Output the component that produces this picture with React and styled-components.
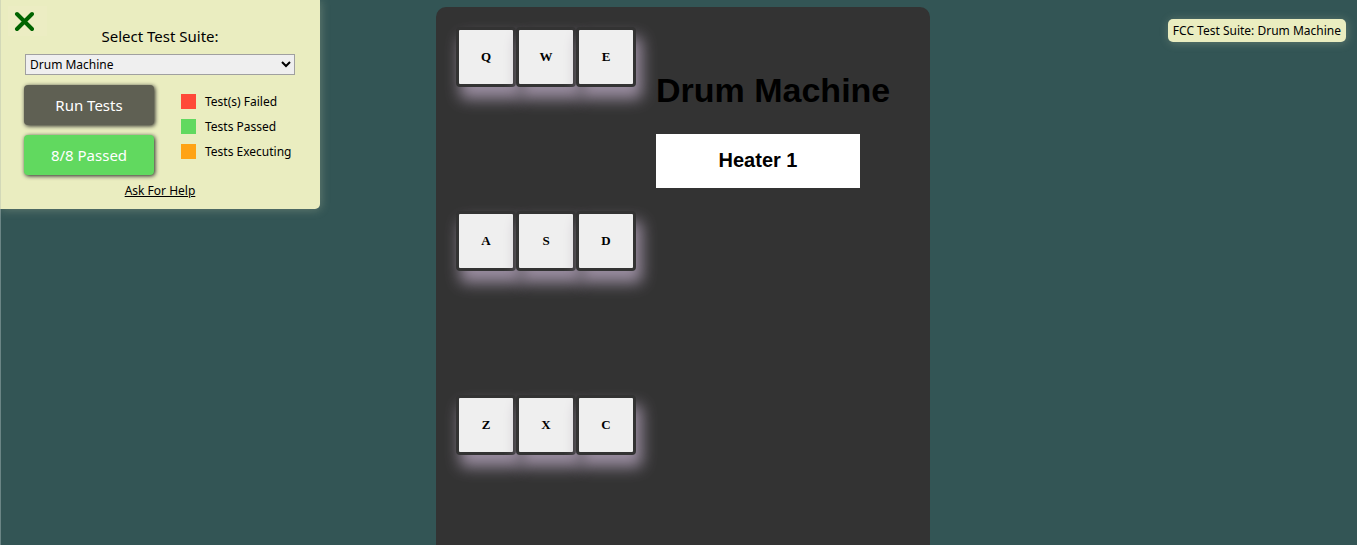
import React from "react";
import styled, { createGlobalStyle } from "styled-components";

const GlobalStyle = createGlobalStyle`
  * { box-sizing: border-box; }
  html { scrollbar-width: none; }
  body {
    min-height: 100vh;
    margin: 0;
    border-left: 1px solid #6b8585;
    background: #335555;
    color: #000;
    font-family: "Liberation Sans", Arial, sans-serif;
  }
`;

const Page = styled.div`
  display: flex;
  padding-left: 8px;
`;

const Machine = styled.main`
  display: flex;
  width: 494px;
  margin: 7px auto 0;
  padding: 20px;
  border-radius: 10px;
  background: #333;
`;

const Pads = styled.div`
  display: grid;
  grid-template-columns: repeat(3, 60px);
  grid-auto-rows: 184px;
`;

const Pad = styled.button`
  width: 60px;
  height: 60px;
  padding: 0;
  border: 3px solid #333;
  border-radius: 4px;
  background: #efefef;
  color: #000;
  box-shadow: 5px 11px 15px 1px #9a8da0;
  font: bold 13px "Liberation Serif", "Times New Roman", serif;
`;

const Info = styled.section`
  margin-left: 20px;
`;

const Title = styled.h1`
  margin: 44px 0 24px;
  font-size: 34px;
  line-height: 39px;
  white-space: nowrap;
`;

const Display = styled.p`
  width: 204px;
  margin: 0;
  padding-bottom: 2px;
  background: #fff;
  font-size: 20px;
  font-weight: bold;
  line-height: 52px;
  text-align: center;
`;

const Panel = styled.aside`
  position: absolute;
  top: 0;
  left: 0;
  width: 320px;
  padding: 24px 25px 10px 24px;
  border-left: 1px solid #d3d9b8;
  border-radius: 0 0 5px 0;
  background: #eaedc0;
  box-shadow: 1px 1px 10px rgba(234, 237, 192, 0.25);
  font: 12px "Noto Sans", sans-serif;
`;

const CloseButton = styled.button`
  position: absolute;
  top: 6px;
  left: 7px;
  width: 39px;
  height: 30px;
  padding: 0 0 0 5px;
  border: 0;
  background: #ecedc3;
  svg { display: block; }
`;

const SuiteLabel = styled.label`
  display: block;
  margin-bottom: 6px;
  font-size: 15px;
  line-height: 24px;
  text-align: center;
`;

const SuiteSelect = styled.select`
  display: block;
  width: 270px;
  height: 21px;
  border: 1px solid #a0a0a0;
  border-radius: 0;
  background: #efefef;
  color: #000;
  font: 12px "Noto Sans", sans-serif;
`;

const Results = styled.div`
  display: flex;
  margin: 10px 0 0 -1px;
`;

const Actions = styled.div`
  display: grid;
  gap: 10px;
`;

const Action = styled.button`
  width: 130px;
  height: 40px;
  padding: 0;
  border: 0;
  border-radius: 4px;
  background: ${({ $color }) => $color};
  color: #fff;
  box-shadow: 1px 1px 4px #222;
  font: 15px "Noto Sans", sans-serif;
`;

const Legend = styled.ul`
  margin: 4px 0 0 27px;
  padding: 0;
  list-style: none;
`;

const LegendItem = styled.li`
  display: flex;
  align-items: center;
  gap: 9px;
  height: 25px;
  white-space: nowrap;
  &::before {
    content: "";
    width: 15px;
    height: 15px;
    background: ${({ $color }) => $color};
  }
`;

const HelpLink = styled.a`
  display: block;
  width: max-content;
  margin: 7px auto 0;
  color: #000;
  line-height: 17px;
`;

const SuiteBadge = styled.div`
  position: absolute;
  top: 19px;
  right: 11px;
  padding: 0 5px;
  border-radius: 5px;
  background: #eaedc0;
  box-shadow: 1px 1px 10px rgba(234, 237, 192, 0.25);
  font: 12px/23px "Noto Sans", sans-serif;
`;

const keys = ["Q", "W", "E", "A", "S", "D", "Z", "X", "C"];

export default function App() {
  return (
    <>
      <GlobalStyle />
      <Page>
        <Machine>
          <Pads>
            {keys.map((key) => <Pad key={key} type="button">{key}</Pad>)}
          </Pads>
          <Info>
            <Title>Drum Machine</Title>
            <Display>Heater 1</Display>
          </Info>
        </Machine>
      </Page>
      <Panel>
        <CloseButton type="button" aria-label="Close test panel">
          <svg width="21" height="30" viewBox="0 0 21 30" stroke="#006400" strokeWidth="4" strokeLinecap="round">
            <path d="M4 8 19 23M19 8 4 23" />
          </svg>
        </CloseButton>
        <SuiteLabel htmlFor="suite">Select Test Suite:</SuiteLabel>
        <SuiteSelect id="suite" defaultValue="Drum Machine">
          <option>Drum Machine</option>
        </SuiteSelect>
        <Results>
          <Actions>
            <Action type="button" $color="#5f6053">Run Tests</Action>
            <Action type="button" $color="#61d95f">8/8 Passed</Action>
          </Actions>
          <Legend>
            <LegendItem $color="#ff4939">Test(s) Failed</LegendItem>
            <LegendItem $color="#61d95f">Tests Passed</LegendItem>
            <LegendItem $color="#ffa315">Tests Executing</LegendItem>
          </Legend>
        </Results>
        <HelpLink href="#help">Ask For Help</HelpLink>
      </Panel>
      <SuiteBadge>FCC Test Suite: Drum Machine</SuiteBadge>
    </>
  );
}
